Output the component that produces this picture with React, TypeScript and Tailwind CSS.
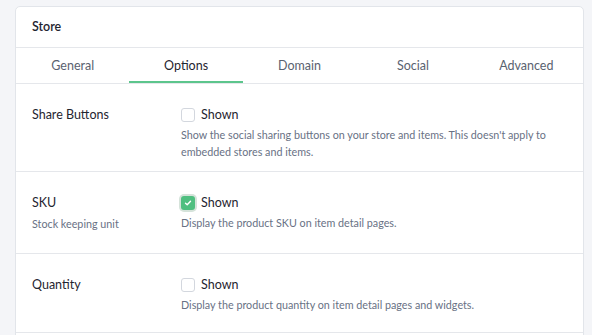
import React from 'react';

const tabs = ['General', 'Options', 'Domain', 'Social', 'Advanced'];

interface Option {
  label: string;
  sub?: string;
  checked: boolean;
  desc: string;
  h: string;
}

const options: Option[] = [
  {
    label: 'Share Buttons',
    checked: false,
    desc: "Show the social sharing buttons on your store and items. This doesn't apply to embedded stores and items.",
    h: 'h-[88px]',
  },
  {
    label: 'SKU',
    sub: 'Stock keeping unit',
    checked: true,
    desc: 'Display the product SKU on item detail pages.',
    h: 'h-[82px]',
  },
  {
    label: 'Quantity',
    checked: false,
    desc: 'Display the product quantity on item detail pages and widgets.',
    h: 'h-[79px]',
  },
];

function Checkbox({ checked }: { checked: boolean }) {
  if (checked) {
    return (
      <span className="w-[14px] h-[14px] rounded-[3px] bg-[#4fbf80] ring-2 ring-[#d5e3da] flex items-center justify-center">
        <svg width="8" height="8" viewBox="0 0 8 8" fill="none">
          <path d="M1.5 4.2L3.2 5.8L6.5 2.3" stroke="white" strokeWidth="1.4" strokeLinecap="round" strokeLinejoin="round" />
        </svg>
      </span>
    );
  }
  return <span className="w-[14px] h-[14px] rounded-[3px] border border-[#d3d7de] bg-white" />;
}

export default function App() {
  return (
    <div className="min-h-screen bg-[#f4f5f8] pt-[6px] pl-[15px] pr-[8px] font-['Lato',sans-serif]">
      <div className="bg-white border border-[#e2e5ea] rounded-[5px] overflow-hidden">
        {/* Header */}
        <div className="h-[41px] flex items-center px-4 pt-[1px] border-b border-[#e5e7eb]">
          <h1 className="text-[12.5px] font-semibold text-[#1f2530]">Store</h1>
        </div>

        {/* Tabs */}
        <div className="grid grid-cols-5 border-b border-[#e5e7eb] h-[36px]">
          {tabs.map((t) => (
            <div
              key={t}
              className={`flex items-center justify-center text-[12.5px] pt-[4px] border-b-2 ${
                t === 'Options' ? 'text-[#1f2530] border-[#5cc58c]' : 'text-[#5a6270] border-transparent'
              }`}
            >
              {t}
            </div>
          ))}
        </div>

        {/* Rows */}
        {options.map((o) => (
          <div key={o.label} className={`flex border-b border-[#e5e7eb] pt-[23px] ${o.h}`}>
            <div className="w-[165px] pl-4 shrink-0">
              <div className="text-[12.5px] text-[#1f2530] leading-[16px]">{o.label}</div>
              {o.sub && <div className="text-[10.75px] text-[#687184] mt-[4px] leading-[17px]">{o.sub}</div>}
            </div>
            <div className="flex-1 pr-6">
              <label className="flex items-center gap-[6px] h-[16px]">
                <Checkbox checked={o.checked} />
                <span className="text-[12.5px] text-[#1f2530]">Shown</span>
              </label>
              <p className="text-[10.75px] text-[#687184] mt-[3px] leading-[17px]">{o.desc}</p>
            </div>
          </div>
        ))}
        <div className="h-[20px]" />
      </div>
    </div>
  );
}
